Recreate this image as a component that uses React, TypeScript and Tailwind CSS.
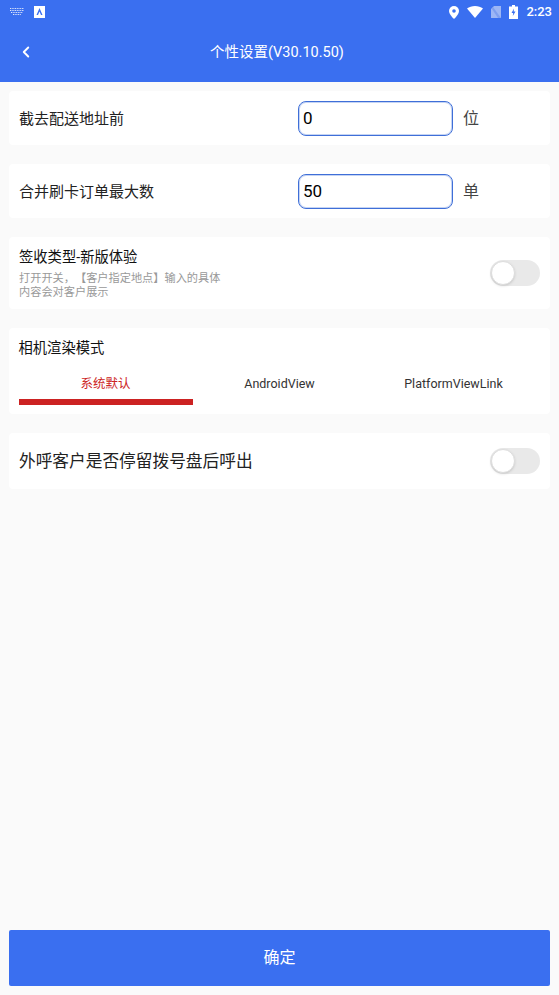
import { useState } from "react"
import { ChevronLeft } from "lucide-react"

const FONT = "font-['Roboto','Noto_Sans_CJK_SC',sans-serif] [text-spacing-trim:space-all]"

function Toggle() {
  return (
    <div className="relative h-[26px] w-[50px] rounded-full bg-[#e9e9e9]">
      <div className="absolute left-[1px] top-[1px] h-[24px] w-[24px] rounded-full border border-[#dddddd] bg-white shadow-sm" />
    </div>
  )
}

function InputRow({ label, value, unit }: { label: string; value: string; unit: string }) {
  return (
    <div className="flex h-[54px] items-center rounded-[4px] bg-white pl-[10px]">
      <span className="w-[279px] pt-[2px] text-[15px] text-[#222222]">{label}</span>
      <div className="flex h-[35px] w-[155px] items-center rounded-[8px] border border-[#3f6fd8] pl-[4px] pt-[2px] text-[17px] text-black ring-1 ring-inset ring-[#3f6fd8]/30">
        {value}
      </div>
      <span className="ml-[10px] pt-[2px] text-[16px] text-[#444444]">{unit}</span>
    </div>
  )
}

function StatusBar() {
  return (
    <div className="flex h-[24px] items-center justify-between pl-[10px] pr-[7px]">
      <div className="flex items-center gap-[10px]">
        <svg width="14" height="8" viewBox="0 0 14 8" stroke="#dfe7fb" strokeWidth="1" strokeDasharray="1 0.700" fill="none">
          <path d="M0 .5h14M0 2.500h14M1 4.500h12M3 6.500h8" />
        </svg>
        <svg width="11" height="12" viewBox="0 0 11 12">
          <rect width="11" height="12" fill="white" />
          <path d="M5.500 2 8.500 9H7L5.500 5.500 4 9H2.500z" fill="#3a6ff0" />
        </svg>
      </div>
      <div className="flex items-center gap-[8px]">
        <svg width="10" height="13" viewBox="0 0 10 13">
          <path d="M5 0a5 5 0 0 1 5 5c0 3.500-5 8-5 8S0 8.500 0 5a5 5 0 0 1 5-5z" fill="white" />
          <circle cx="5" cy="5" r="1.800" fill="#3a6ff0" />
        </svg>
        <svg width="16" height="12" viewBox="0 0 16 12">
          <path d="M0 2.500C2 .9 5 0 8 0s6 .9 8 2.500L8 12z" fill="white" />
        </svg>
        <svg width="10" height="12" viewBox="0 0 10 12">
          <path d="M3 0h7v12H0V3z" fill="#9db6f5" />
          <path d="M2 1 10 12H7L1 3z" fill="#7f9ff0" />
        </svg>
        <svg width="9" height="14" viewBox="0 0 9 14">
          <path d="M3 0h3v1.500h3V14H0V1.500h3z" fill="white" />
          <path d="M5 3.500 2.500 8h1.700L3.800 11 6.500 6.500H4.700z" fill="#3a6ff0" />
        </svg>
        <span className="text-[13px] font-medium text-white">2:23</span>
      </div>
    </div>
  )
}

const TABS = ["系统默认", "AndroidView", "PlatformViewLink"]

export default function App() {
  const [tab] = useState(0)

  return (
    <div className={`flex h-[995px] flex-col bg-[#fafafa] ${FONT}`}>
      <div className="bg-[#3a6ff0]">
        <StatusBar />
        <div className="relative flex h-[58px] items-center justify-center pr-[5px] text-[14.500px] text-white">
          <ChevronLeft className="absolute left-[17px] top-[19px] h-[18px] w-[18px]" strokeWidth={2.5} />
          个性设置(V30.10.50)
        </div>
      </div>

      <div className="flex flex-1 flex-col gap-[19px] px-[9px] pt-[9px]">
        <InputRow label="截去配送地址前" value="0" unit="位" />
        <InputRow label="合并刷卡订单最大数" value="50" unit="单" />

        <div className="flex h-[72px] items-center justify-between rounded-[4px] bg-white pl-[10px] pr-[10px]">
          <div>
            <div className="text-[14.300px] leading-[20px] text-[#111111]">签收类型-新版体验</div>
            <div className="mt-[5px] w-[205px] text-[11.200px] leading-[14px] text-[#999999]">
              打开开关，【客户指定地点】输入的具体内容会对客户展示
            </div>
          </div>
          <Toggle />
        </div>

        <div className="h-[86px] rounded-[4px] bg-white px-[9.500px] pt-[10px]">
          <div className="text-[14.300px] leading-[20px] text-[#111111]">相机渲染模式</div>
          <div className="mt-[11px] flex">
            {TABS.map((t, i) => (
              <div
                key={t}
                className={`flex h-[36px] w-[174px] items-center justify-center border-b-[6px] text-[12.500px] ${
                  i === tab ? "border-[#cc2222] text-[#cc2222]" : "border-transparent text-[#333333]"
                }`}
              >
                {t}
              </div>
            ))}
          </div>
        </div>

        <div className="flex h-[56px] items-center justify-between rounded-[4px] bg-white px-[10px]">
          <span className="pt-[1px] text-[16.700px] text-[#222222]">外呼客户是否停留拨号盘后呼出</span>
          <Toggle />
        </div>
      </div>

      <div className="px-[9px] pb-[9px]">
        <button className="flex h-[56px] w-full items-center justify-center rounded-[2px] bg-[#3a6ff0] text-[16px] text-white">
          确定
        </button>
      </div>
    </div>
  )
}
